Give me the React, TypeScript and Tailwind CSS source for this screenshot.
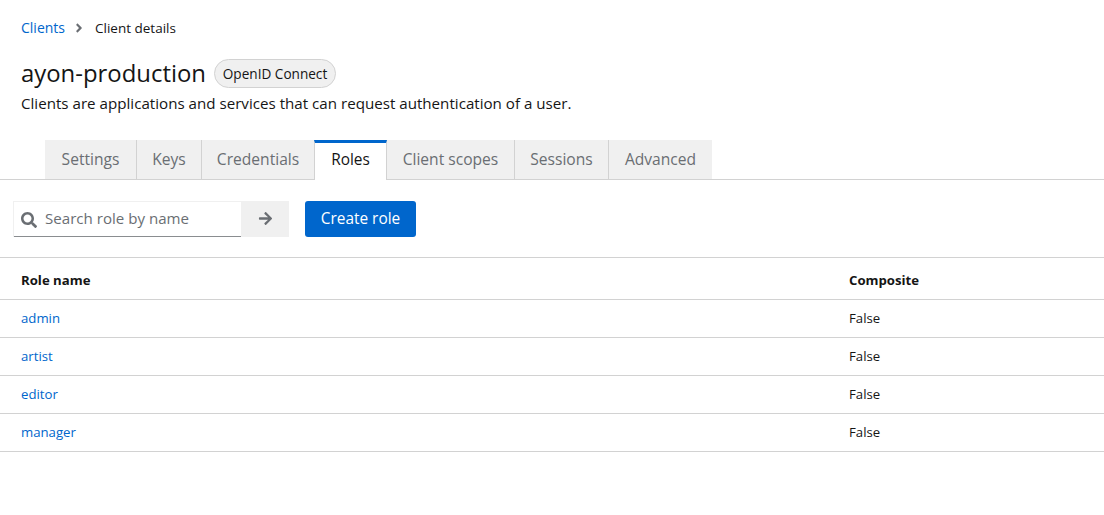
import { FaAngleRight, FaArrowRight, FaSearch } from 'react-icons/fa'

const TABS = [
  { label: 'Settings', width: 'w-[92px]' },
  { label: 'Keys', width: 'w-[65px]' },
  { label: 'Credentials', width: 'w-[113px]' },
  { label: 'Roles', width: 'w-[73px]', active: true },
  { label: 'Client scopes', width: 'w-[128px]' },
  { label: 'Sessions', width: 'w-[94px]' },
  { label: 'Advanced', width: 'w-[103px]' },
]

const ROLES = ['admin', 'artist', 'editor', 'manager']

export default function App() {
  return (
    <div className="h-[515px] w-[1104px] overflow-hidden bg-white pt-[19px] font-['Open_Sans',sans-serif] text-[#151515]">
      {/* Breadcrumb */}
      <nav className="flex h-[17px] items-center pl-[21px] text-[14px] leading-[17px]">
        <a className="text-[#0066cc]">Clients</a>
        <FaAngleRight className="ml-[7px] mr-[9px] size-[14px] text-[#6a6e73]" />
        <span className="pt-px text-[13.5px]">Client details</span>
      </nav>

      {/* Header */}
      <div className="mt-[22px] flex h-[30px] items-center pl-[21px]">
        <h1 className="text-[23.9px] leading-[30px]">ayon-production</h1>
        <span className="ml-[8px] flex h-[29px] w-[122px] items-center justify-center rounded-full border border-[#d2d2d2] bg-[#f0f0f0] pt-[2px] text-[13.6px]">
          OpenID Connect
        </span>
      </div>
      <p className="mt-[4px] pl-[21px] text-[15.15px] leading-[22px]">
        Clients are applications and services that can request authentication of a user.
      </p>

      {/* Tabs */}
      <div className="mt-[26px] flex h-[40px] border-b border-[#d2d2d2] pl-[45px]">
        {TABS.map((tab) =>
          tab.active ? (
            <div
              key={tab.label}
              className={`${tab.width} -mb-px -ml-px flex h-[40px] items-center justify-center border-x border-t-[3px] border-x-[#d2d2d2] border-t-[#0066cc] bg-white pb-[3px] text-[15.4px] text-[#151515]`}
            >
              {tab.label}
            </div>
          ) : (
            <div
              key={tab.label}
              className={`${tab.width} flex h-[39px] items-center justify-center border-r border-[#d2d2d2] bg-[#f0f0f0] text-[15.6px] text-[#6a6e73] last:border-r-0`}
            >
              {tab.label}
            </div>
          ),
        )}
      </div>

      {/* Toolbar */}
      <div className="mt-[21px] flex h-[36px] items-stretch pl-[13px]">
        <div className="flex w-[229px] items-center border border-b-0 border-[#f0f0f0] shadow-[inset_0_-1px_0_#8a8d90]">
          <FaSearch className="ml-[7px] size-[16px] text-[#6a6e73]" />
          <span className="ml-[8px] pb-[2px] text-[15.1px] text-[#6a6e73]">Search role by name</span>
        </div>
        <button className="flex w-[47px] items-center justify-center bg-[#f0f0f0] pb-[1px] pr-[1px] text-[#6a6e73]">
          <FaArrowRight className="size-[15px]" />
        </button>
        <button className="ml-[16px] w-[111px] rounded-[3px] bg-[#0066cc] text-[15.4px] text-white">
          Create role
        </button>
      </div>

      {/* Table */}
      <div className="mt-[20px] border-t border-[#d2d2d2]">
        <div className="flex h-[42px] items-center border-b border-[#d2d2d2] pt-[4px] text-[13.2px] font-bold">
          <div className="w-[849px] pl-[21px]">Role name</div>
          <div>Composite</div>
        </div>
        {ROLES.map((role) => (
          <div key={role} className="flex h-[38px] items-center border-b border-[#d2d2d2] text-[13.2px]">
            <div className="w-[849px] pl-[21px] text-[#0066cc]">{role}</div>
            <div>False</div>
          </div>
        ))}
      </div>
    </div>
  )
}
